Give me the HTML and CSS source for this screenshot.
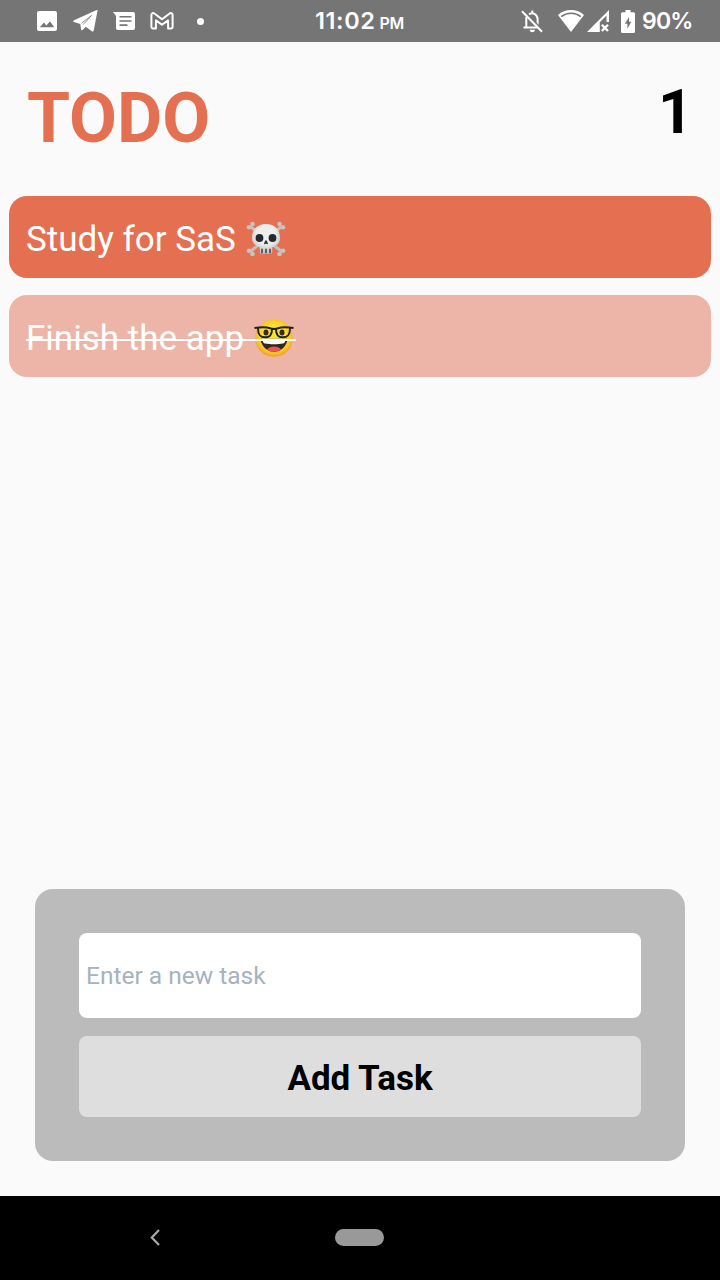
FILE: index.html
```html
<!DOCTYPE html>
<html lang="en">
<head>
<meta charset="utf-8">
<meta name="viewport" content="width=device-width, initial-scale=1">
<title>TODO</title>
<link rel="stylesheet" href="styles.css">
</head>
<body>
<div class="screen">
  <div class="status-bar">
    <div class="notifications">
      <svg class="icon-photo" width="20" height="20" viewBox="0 0 20 20"><path fill="#fff" fill-rule="evenodd" d="M2 0h16a2 2 0 0 1 2 2v16a2 2 0 0 1-2 2H2a2 2 0 0 1-2-2V2a2 2 0 0 1 2-2zM2.800 16.200h14.400l-4.200-6-3.600 4.300-2.500-3z"/></svg>
      <svg class="icon-telegram" width="25" height="22" viewBox="0 0 25 22"><path fill="#fff" d="M24.600.3 20.800 20.200c-.2 1.300-1.100 1.600-2 1l-6-4.500-3.200 3.200c-.8.800-1.400.4-1.500-.6l-.8-5.300L1 11.900c-1.100-.4-1.100-1.100 0-1.600L23.200.2c.9-.4 1.600-.3 1.400.1z"/><path fill="none" stroke="#757575" stroke-width=".8" d="m8.500 13.200 10-7.700-8.200 9"/></svg>
      <svg class="icon-message" width="22" height="18" viewBox="0 0 22 18"><path fill="#fff" d="M0 0h20a2 2 0 0 1 2 2v14a2 2 0 0 1-2 2H5a2 2 0 0 1-2-2V4z"/><path stroke="#757575" stroke-width="1.600" d="M6.500 4.800h12M6.500 9h12M6.500 13.100h8"/></svg>
      <svg class="icon-mail" width="24" height="18" viewBox="0 0 24 18"><path fill="none" stroke="#fff" stroke-width="2" stroke-linejoin="round" d="M1.400 2.900C1.400 1 3.200.6 4.700 1.700L12 7.200l7.300-5.500c1.500-1.100 3.300-.7 3.300 1.200v12.200c0 .9-.5 1.400-1.300 1.400h-3.200V8.400L12 12.800 5.900 8.400v8.100H2.700c-.8 0-1.300-.5-1.300-1.400z"/></svg>
      <span class="more-dot"></span>
    </div>
    <div class="clock"><span class="time">11:02</span><span class="period">PM</span></div>
    <div class="indicators">
      <svg width="22" height="24" viewBox="0 0 22 24"><path fill="none" stroke="#fff" stroke-width="2" d="M5.300 8v10M2.500 18.500h14M8 5.400c4-2.600 8.600.1 8.600 4.800v6M11.300 1.500v3"/><path fill="#fff" d="M8.700 20.800h5.200a2.600 2.400 0 0 1-5.200 0z"/><path stroke="#757575" stroke-width="1.500" d="m2.500 1 19 19.800"/><path stroke="#fff" stroke-width="2" d="m1 2.200 20 20.500"/></svg>
      <svg class="icon-wifi" width="26" height="22" viewBox="0 0 26 22"><path fill="#fff" d="M13 0c5 0 9.600 1.700 13 5L13 22 0 5C3.400 1.700 8 0 13 0z"/><path fill="none" stroke="#757575" stroke-width="1.700" d="M3.200 6.600c5.800-4.500 13.800-4.500 19.600 0"/></svg>
      <svg class="icon-signal" width="22" height="22" viewBox="0 0 22 22"><path fill="#fff" fill-rule="evenodd" d="M22 0v12h-2.500V5.500l-6.700 6.700V22H0z"/><path stroke="#fff" stroke-width="2.300" d="m14.800 14.800 6.200 6.200m0-6.200L14.800 21"/></svg>
      <svg class="icon-battery" width="14" height="23" viewBox="0 0 14 23"><path fill="#fff" d="M4.500 0h5v2.300h3A1.500 1.500 0 0 1 14 3.800v17.700a1.500 1.500 0 0 1-1.500 1.500h-11A1.500 1.500 0 0 1 0 21.500V3.800a1.500 1.500 0 0 1 1.500-1.500h3z"/><path fill="#757575" d="M8 7 3.900 13.800h2.500V18.700l3.900-7H8z"/></svg>
      <span class="charge">90%</span>
    </div>
  </div>

  <main class="app">
    <header class="header">
      <h1 class="title">TODO</h1>
      <span class="count">1</span>
    </header>
    <ul class="tasks">
      <li class="task"><span class="label">Study for SaS</span>
        <svg class="skull" width="40" height="36" viewBox="0 0 40 36">
          <defs><radialGradient id="bone" cx=".5" cy=".35" r=".65"><stop offset=".5" stop-color="#eeeeee"/><stop offset="1" stop-color="#bdbdbd"/></radialGradient></defs>
          <g stroke="#c4bfbd" stroke-width="3" stroke-linecap="round"><path d="m5 6 30 24M35 6 5 30"/></g>
          <g fill="#c7c4c2"><circle cx="3" cy="6.200" r="2.300"/><circle cx="6.500" cy="3" r="2.300"/><circle cx="37" cy="6.200" r="2.300"/><circle cx="33.500" cy="3" r="2.300"/><circle cx="3" cy="29.800" r="2.300"/><circle cx="6.500" cy="33" r="2.300"/><circle cx="37" cy="29.800" r="2.300"/><circle cx="33.500" cy="33" r="2.300"/></g>
          <path fill="url(#bone)" d="M20 3C11 3 6 9 6 17c0 4 2 7 6.500 8.500l1.300 1V31c0 1 1 2 2 2h8.400c1 0 2-1 2-2v-4.500l1.300-1C32 24 34 21 34 17 34 9 29 3 20 3z"/>
          <circle cx="13.500" cy="17" r="3.900" fill="#25292b"/><circle cx="26.500" cy="17" r="3.900" fill="#25292b"/>
          <path fill="#303335" d="M20 19c1.200 1.400 2.300 3.100 1.800 3.900-.6.700-1.200 0-1.800-.3-.6.300-1.200 1-1.800.3-.5-.8.600-2.500 1.800-3.900z"/>
          <path stroke="#303335" stroke-width="1.400" stroke-linecap="round" d="M16 28.300v3.500M20 28.300v3.500M24 28.300v3.500"/>
        </svg>
      </li>
      <li class="task done"><span class="label">Finish the app</span>
        <svg class="nerd" width="40" height="40" viewBox="0 0 40 40">
          <defs><radialGradient id="face" cx=".5" cy=".45" r=".55"><stop offset=".55" stop-color="#fde030"/><stop offset=".85" stop-color="#f9bf2b"/><stop offset="1" stop-color="#ee9724"/></radialGradient></defs>
          <circle cx="20" cy="20" r="18.800" fill="url(#face)"/>
          <ellipse cx="12" cy="14.500" rx="2.500" ry="3" fill="#352b20"/><ellipse cx="28" cy="14.500" rx="2.500" ry="3" fill="#352b20"/>
          <path fill="#322820" d="M6.500 20.800h27C33 28 27 33.800 20 33.800S7 28 6.500 20.800z"/>
          <path fill="#fff" d="M8 20.800h24c-.5 3-1.800 4.600-3 4.800-5.300 1-12.700 1-18 0-1.200-.2-2.500-1.800-3-4.800z"/>
          <path fill="#ed5454" d="M13 31.500c1.200-2 4-3 7-3s5.800 1 7 3c-4 3.100-10 3.100-14 0z"/>
          <path fill="none" stroke="#202124" stroke-width="1.900" stroke-linejoin="round" d="M.5 10c5-.9 12-1.200 16.500.5 2 .7 4 .7 6 0C27.500 8.800 34.500 9.100 39.500 10M4 10.500c0 5.500 1.500 8.800 7.500 8.800 5 0 6.500-3.800 6.500-8.300M36 10.500c0 5.500-1.500 8.800-7.500 8.800-5 0-6.500-3.800-6.500-8.300"/>
        </svg>
      </li>
    </ul>
    <form class="composer">
      <input class="task-input" type="text" placeholder="Enter a new task" aria-label="Enter a new task">
      <button class="add-button" type="button">Add Task</button>
    </form>
  </main>

  <nav class="nav-bar">
    <svg width="10" height="17" viewBox="0 0 10 17"><path fill="none" stroke="#a9a9a9" stroke-width="2.200" d="M9 1 1.800 8.500 9 16"/></svg>
    <span class="home-pill"></span>
  </nav>
</div>
</body>
</html>
```
FILE: styles.css
```css
* { box-sizing: border-box; }
body { margin: 0; font-family: Roboto, sans-serif; }
svg { display: block; flex: none; }
.screen { width: 720px; height: 1280px; display: flex; flex-direction: column; background: #fafafa; overflow: hidden; }

.status-bar { height: 42px; flex: none; display: grid; grid-template-columns: 315px 1fr auto; align-items: center; padding: 0 28px 2px 0; background: #757575; color: #fff; font-family: Inter, sans-serif; font-weight: 600; }
.notifications { display: flex; align-items: center; padding: 0 0 0 37px; }
.icon-telegram { margin-left: 16px; }
.icon-message { margin-left: 15px; }
.icon-mail { margin-left: 15px; }
.more-dot { width: 7px; height: 7px; margin-left: 23px; border-radius: 50%; background: #fff; }
.clock { display: flex; align-items: baseline; gap: 4px; padding-top: 2px; line-height: 38px; }
.time { font-size: 23.5px; letter-spacing: 0.6px; }
.period { font-size: 16px; letter-spacing: -0.4px; }
.indicators { display: flex; align-items: center; line-height: 38px; }
.icon-wifi { margin-left: 15px; }
.icon-signal { margin-left: 3px; }
.icon-battery { margin-left: 12px; }
.charge { width: 50px; margin-left: 7px; font-size: 23px; letter-spacing: -0.8px; white-space: nowrap; }

.app { flex: 1; display: flex; flex-direction: column; }
.header { height: 154px; flex: none; display: flex; justify-content: space-between; padding: 35px 27px 0 27px; }
.title { margin: 0; font-size: 69.5px; line-height: 84px; font-weight: 700; color: #e57051; }
.count { font-size: 61px; line-height: 70px; font-weight: 700; color: #000; }
.tasks { list-style: none; margin: 0; padding: 0 9px; display: flex; flex-direction: column; gap: 17px; }
.task { height: 82px; display: flex; align-items: center; padding: 4px 17px 0; border-radius: 18px; background: #e57051; color: #fff; font-size: 35px; line-height: 42px; }
.label { padding-top: 1px; }
.done { position: relative; background: #ecb5a8; }
.done::after { content: ""; position: absolute; left: 17px; top: 44px; width: 270px; height: 2px; background: #fff; }
.skull { margin-left: 10px; }
.nerd { margin-left: 10px; }

.composer { margin: auto 35px 35px; height: 272px; display: flex; flex-direction: column; gap: 18px; padding: 44px; border-radius: 18px; background: #bbb; }
.task-input { height: 85px; width: 100%; padding: 0 7px 1px; border: 0; border-radius: 8px; background: #fff; font: 24.5px Roboto, sans-serif; }
.task-input::placeholder { color: #a6b2be; opacity: 1; }
.add-button { height: 81px; padding: 3px 0 0; border: 0; border-radius: 8px; background: #dedede; color: #000; font: 700 35px Roboto, sans-serif; }

.nav-bar { height: 84px; flex: none; display: flex; align-items: center; padding: 0 0 2px 150px; background: #000; }
.home-pill { width: 49px; height: 17px; margin-left: 175px; border-radius: 9px; background: #999; }
```
